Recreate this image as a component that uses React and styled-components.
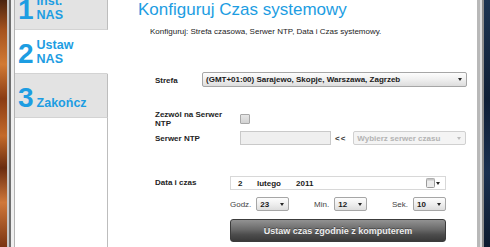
import styled, { createGlobalStyle } from "styled-components";

const colors = {
    blue: "#1d9de2",
    text: "#232323",
    stepBg: "#e3e3e3",
    stepLine: "#d3d3d3",
    sideEdge: "#bdbdbd",
};

const GlobalStyle = createGlobalStyle`
    html, body {
        margin: 0;
        padding: 0;
        height: 247px;
        overflow: hidden;
        background: #fff;
    }
    body {
        font-family: "Liberation Sans", Arial, sans-serif;
    }
`;

export default function App() {
    return (
        <>
            <GlobalStyle />
            <Screen>
                <DeskLeft />
                <Window>
                    <Sidebar>
                        <Step>
                            <StepNum>1</StepNum>
                            <StepText>
                                Inst.
                                <br />
                                NAS
                            </StepText>
                        </Step>
                        <Step $active>
                            <StepNum>2</StepNum>
                            <StepText>
                                Ustaw
                                <br />
                                NAS
                            </StepText>
                        </Step>
                        <Step>
                            <StepNum>3</StepNum>
                            <StepText>Zakończ</StepText>
                        </Step>
                        <SideFill />
                    </Sidebar>
                    <Main>
                        <Title>Konfiguruj Czas systemowy</Title>
                        <Subtitle>
                            Konfiguruj: Strefa czasowa, Serwer NTP, Data i Czas systemowy.
                        </Subtitle>
                        <Form>
                            <Row $top={35}>
                                <Label $w={47} $drop={2}>
                                    Strefa
                                </Label>
                                <Select w={265} h={15} value="(GMT+01:00) Sarajewo, Skopje, Warszawa, Zagrzeb" />
                            </Row>
                            <Row $top={23}>
                                <Label $w={85}>
                                    Zezwól na Serwer
                                    <br />
                                    NTP
                                </Label>
                                <Checkbox />
                            </Row>
                            <Row $top={3}>
                                <Label $w={85}>Serwer NTP</Label>
                                <TextInput />
                                <Chevrons>&lt;&lt;</Chevrons>
                                <Select w={113} h={14} disabled value="Wybierz serwer czasu" />
                            </Row>
                            <Row $top={31} $start>
                                <Label $w={75} $lh={14}>
                                    Data i czas
                                </Label>
                                <DateColumn>
                                    <DateField>
                                        <DatePart $w={19}>2</DatePart>
                                        <DatePart $w={39}>lutego</DatePart>
                                        <DatePart>2011</DatePart>
                                        <CalButton>
                                            <svg width="9" height="10" viewBox="0 0 9 10">
                                                <rect x="0.5" y="0.5" width="8" height="9" rx="1" fill="#ececec" stroke="#9a9a9a" />
                                                <rect x="0.5" y="0.5" width="8" height="2" fill="#c4c4c4" />
                                            </svg>
                                            <Arrow />
                                        </CalButton>
                                    </DateField>
                                    <TimeRow>
                                        <TimeGroup>
                                            <TimeLabel>Godz.</TimeLabel>
                                            <Select w={33} h={14} value="23" />
                                        </TimeGroup>
                                        <TimeGroup>
                                            <TimeLabel>Min.</TimeLabel>
                                            <Select w={33} h={14} value="12" />
                                        </TimeGroup>
                                        <TimeGroup>
                                            <TimeLabel>Sek.</TimeLabel>
                                            <Select w={33} h={14} value="10" />
                                        </TimeGroup>
                                    </TimeRow>
                                    <SyncButton>Ustaw czas zgodnie z komputerem</SyncButton>
                                </DateColumn>
                            </Row>
                        </Form>
                    </Main>
                </Window>
                <DeskRight />
            </Screen>
        </>
    );
}

function Select({ w, h, value, disabled }) {
    return (
        <SelectBox $w={w} $h={h} $disabled={disabled}>
            <span>{value}</span>
            <Arrow $disabled={disabled} />
        </SelectBox>
    );
}

const Screen = styled.div`
    display: flex;
    width: 490px;
    height: 247px;
    overflow: hidden;
`;

const DeskLeft = styled.div`
    width: 7px;
    flex-shrink: 0;
    background: linear-gradient(
        180deg,
        #4a2410 0%,
        #a4521e 12%,
        #d27a34 26%,
        #8a3c14 40%,
        #c46a2a 55%,
        #6a2c10 68%,
        #d0783a 82%,
        #7a3412 100%
    );
`;

const DeskRight = styled.div`
    width: 6px;
    flex-shrink: 0;
    background: linear-gradient(180deg, #1d3552 0%, #0f1f36 40%, #1a3050 70%, #0c1a2e 100%);
`;

const Window = styled.div`
    flex: 1;
    display: flex;
    padding: 0 7px 0 8px;
    background: #fff;
    box-shadow: inset 2px 0 0 #c6c6c6, inset 4px 0 0 #6e6e6e, inset 7px 0 0 #efefef,
        inset 8px 0 0 #b3b3b3, inset -2px 0 0 #8c8c8c, inset -4px 0 0 #dedede,
        inset -7px 0 0 #b8b8b8;
`;

const Sidebar = styled.div`
    width: 93px;
    flex-shrink: 0;
    display: flex;
    flex-direction: column;
    margin-top: -14px;
`;

const Step = styled.div`
    display: flex;
    align-items: flex-end;
    gap: 3px;
    height: 28px;
    padding: 8px 0 7px 3px;
    background: ${(p) => (p.$active ? "#fff" : colors.stepBg)};
    border-bottom: 1px solid ${colors.stepLine};
    border-right: 1px solid ${(p) => (p.$active ? "#fff" : colors.sideEdge)};
`;

const StepNum = styled.span`
    font-size: 28px;
    line-height: 25px;
    font-weight: bold;
    color: ${colors.blue};
`;

const StepText = styled.span`
    font-size: 12.5px;
    line-height: 14px;
    font-weight: bold;
    color: ${colors.blue};
`;

const SideFill = styled.div`
    flex: 1;
    border-right: 1px solid ${colors.sideEdge};
`;

const Main = styled.div`
    flex: 1;
    display: flex;
    flex-direction: column;
    padding-left: 30px;
`;

const Title = styled.h1`
    margin: 0;
    font-size: 17px;
    line-height: 20px;
    font-weight: normal;
    color: ${colors.blue};
`;

const Subtitle = styled.p`
    margin: 7px 0 0 12px;
    font-size: 8px;
    line-height: 10px;
    color: ${colors.text};
`;

const Form = styled.div`
    display: flex;
    flex-direction: column;
    margin-left: 17px;
`;

const Row = styled.div`
    display: flex;
    align-items: ${(p) => (p.$start ? "flex-start" : "center")};
    margin-top: ${(p) => p.$top}px;
`;

const Label = styled.div`
    width: ${(p) => p.$w}px;
    flex-shrink: 0;
    padding-top: ${(p) => p.$drop || 0}px;
    font-size: 8px;
    line-height: ${(p) => p.$lh || 9}px;
    font-weight: bold;
    color: ${colors.text};
`;

const SelectBox = styled.div`
    box-sizing: border-box;
    display: flex;
    align-items: center;
    justify-content: space-between;
    width: ${(p) => p.$w}px;
    height: ${(p) => p.$h}px;
    padding: 0 4px 0 3px;
    border: 1px solid ${(p) => (p.$disabled ? "#d0d0d0" : "#a6a6a6")};
    border-radius: 2px;
    background: ${(p) => (p.$disabled ? "#f4f4f4" : "linear-gradient(180deg, #fdfdfd 0%, #efefef 50%, #dddddd 100%)")};
    font-size: 8px;
    font-weight: bold;
    white-space: nowrap;
    color: ${(p) => (p.$disabled ? "#b3b3b3" : "#1a1a1a")};
`;

const Arrow = styled.span`
    width: 0;
    height: 0;
    border-left: 2.5px solid transparent;
    border-right: 2.5px solid transparent;
    border-top: 3px solid ${(p) => (p.$disabled ? "#bcbcbc" : "#262626")};
`;

const Checkbox = styled.div`
    box-sizing: border-box;
    width: 10px;
    height: 10px;
    border: 1px solid #a8a8a8;
    border-radius: 1px;
    background: linear-gradient(180deg, #e6e6e6, #d2d2d2);
`;

const TextInput = styled.div`
    box-sizing: border-box;
    width: 91px;
    height: 14px;
    border: 1px solid #c9c9c9;
    background: #efefef;
`;

const Chevrons = styled.span`
    margin: 0 7px 0 4px;
    font-size: 8px;
    font-weight: bold;
    letter-spacing: 1px;
    color: #333;
`;

const DateColumn = styled.div`
    display: flex;
    flex-direction: column;
    width: 216px;
`;

const DateField = styled.div`
    box-sizing: border-box;
    display: flex;
    align-items: center;
    height: 14px;
    padding: 0 5px 0 7px;
    border: 1px solid #d8d8d8;
    background: #fff;
    font-size: 8px;
    font-weight: bold;
    color: #1a1a1a;
`;

const DatePart = styled.span`
    width: ${(p) => (p.$w ? `${p.$w}px` : "auto")};
`;

const CalButton = styled.span`
    display: flex;
    align-items: center;
    gap: 1px;
    margin-left: auto;
`;

const TimeRow = styled.div`
    display: flex;
    justify-content: space-between;
    margin-top: 7px;
`;

const TimeGroup = styled.div`
    display: flex;
    align-items: center;
    gap: 5px;
`;

const TimeLabel = styled.span`
    font-size: 8px;
    color: #444;
`;

const SyncButton = styled.div`
    box-sizing: border-box;
    display: flex;
    align-items: center;
    justify-content: center;
    height: 23px;
    margin-top: 8px;
    border: 1px solid #3c3c3c;
    border-radius: 3px;
    background: linear-gradient(180deg, #929292 0%, #6a6a6a 45%, #4c4c4c 70%, #3a3a3a 100%);
    font-size: 9px;
    font-weight: bold;
    color: #ececec;
    text-shadow: 0 -1px 0 rgba(0, 0, 0, 0.35);
`;
